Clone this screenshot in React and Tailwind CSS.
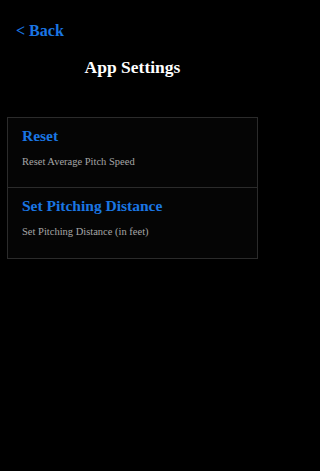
import React from "react";

const settings = [
  { title: "Reset", detail: "Reset Average Pitch Speed" },
  { title: "Set Pitching Distance", detail: "Set Pitching Distance (in feet)" },
];

function SettingRow({ title, detail, last }) {
  return (
    <div
      className={`h-[70px] px-[14px] pt-[7px] ${
        last ? "" : "border-b border-[#2b2b2b]"
      }`}
    >
      <div className="text-[15.5px] font-bold leading-[22px] text-[#1a76e3]">
        {title}
      </div>
      <div className="mt-[8px] text-[10.5px] leading-[14px] text-[#a6a6a6]">
        {detail}
      </div>
    </div>
  );
}

export default function App() {
  return (
    <div
      className="min-h-screen bg-black"
      style={{ fontFamily: '"Liberation Serif", "Times New Roman", serif' }}
    >
      <div className="w-[265px]">
        <div className="px-4 pt-[19px]">
          <button className="text-[16px] font-bold leading-[20px] text-[#1a76e3]">
            &lt; Back
          </button>
        </div>
        <h1 className="mt-[13px] text-center text-[17.5px] font-bold leading-[22px] text-white">
          App Settings
        </h1>
        <div className="mx-[7px] mt-[39px] border border-[#2b2b2b] bg-[#050505]">
          {settings.map((s, i) => (
            <SettingRow
              key={s.title}
              title={s.title}
              detail={s.detail}
              last={i === settings.length - 1}
            />
          ))}
        </div>
      </div>
    </div>
  );
}
